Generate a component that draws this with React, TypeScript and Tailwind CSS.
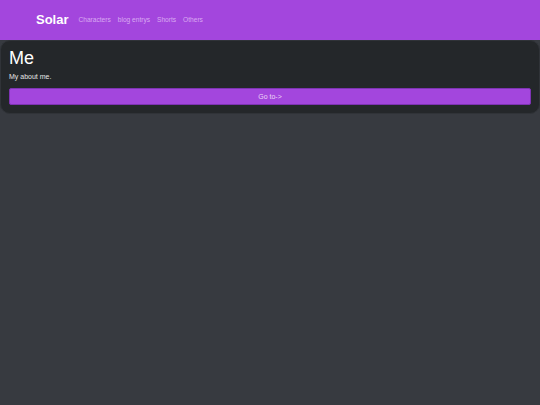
const links = ['Characters', 'blog entrys', 'Shorts', 'Others']

const App = () => {
    return (
        <div className="min-h-screen bg-[#373a40]" style={{ fontFamily: '"Liberation Sans", Arial, sans-serif' }}>
            <nav className="h-[40px] bg-[#a346dd] flex items-center pl-[36px]">
                <span className="text-white font-bold text-[13px] leading-[16px] mr-[10px]">Solar</span>
                <ul className="flex gap-[7px] text-[6.6px] leading-[10px] text-[#d9aaf2]">
                    {links.map((link) => (
                        <li key={link}>{link}</li>
                    ))}
                </ul>
            </nav>
            <div className="bg-[#24272a] border border-[#303338] rounded-[10px] px-[8px] pt-[6px] pb-[8px]">
                <h2 className="text-white text-[18px] leading-[22px]">Me</h2>
                <p className="text-[#e6e6e6] text-[7px] leading-[10px] mt-[3px] mb-[6px]">My about me.</p>
                <button className="block w-full h-[17px] bg-[#a346dd] border border-[#7e33b3] rounded-[2px] text-[#ecd6f7] text-[7px] leading-[10px]">
                    Go to-&gt;
                </button>
            </div>
        </div>
    )
}

export default App
